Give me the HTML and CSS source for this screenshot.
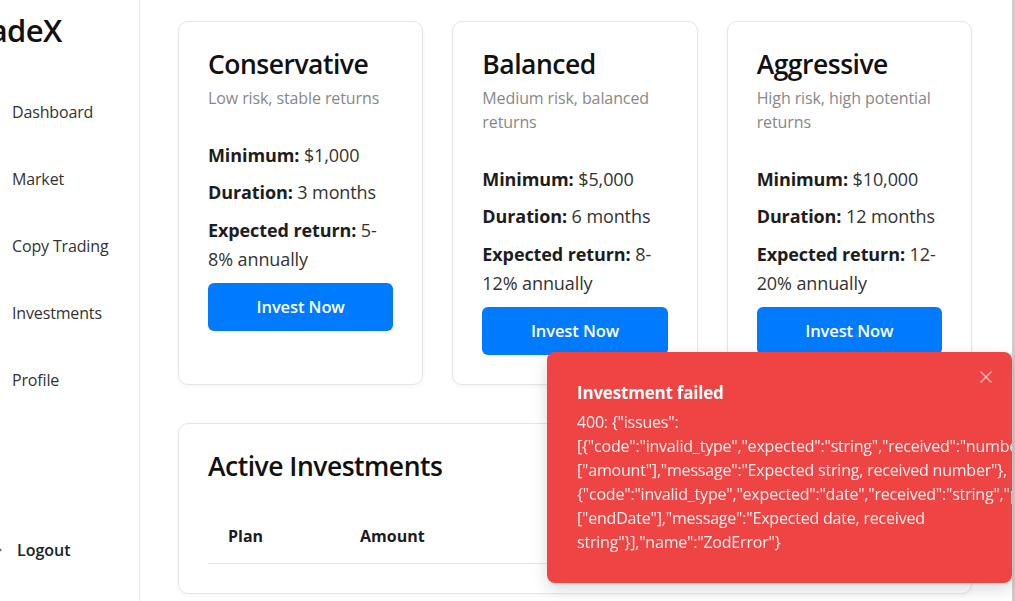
FILE: index.html
```html
<!DOCTYPE html>
<html lang="en">
<head>
<meta charset="utf-8">
<title>TradeX – Investments</title>
<link rel="stylesheet" href="styles.css">
</head>
<body>
<div class="app">
  <aside class="sidebar">
    <div class="logo">TradeX</div>
    <nav class="nav">
      <a class="nav-link" href="#">Dashboard</a>
      <a class="nav-link" href="#">Market</a>
      <a class="nav-link" href="#">Copy Trading</a>
      <a class="nav-link" href="#">Investments</a>
      <a class="nav-link" href="#">Profile</a>
    </nav>
    <button class="logout" type="button">
      <svg class="logout-icon" viewBox="0 0 24 24" width="18" height="18" fill="none" stroke="#6b7280" stroke-width="2" stroke-linecap="round" stroke-linejoin="round"><path d="M9 21H5a2 2 0 0 1-2-2V5a2 2 0 0 1 2-2h4"/><polyline points="16 17 21 12 16 7"/><line x1="21" y1="12" x2="9" y2="12"/></svg>
      <span>Logout</span>
    </button>
  </aside>

  <main class="main">
    <section class="plans">
      <article class="card plan">
        <h3 class="plan-title">Conservative</h3>
        <p class="plan-sub">Low risk, stable returns</p>
        <p class="plan-row"><strong>Minimum:</strong> $1,000</p>
        <p class="plan-row"><strong>Duration:</strong> 3 months</p>
        <p class="plan-row"><strong>Expected return:</strong> 5-8% annually</p>
        <button class="btn" type="button">Invest Now</button>
      </article>
      <article class="card plan">
        <h3 class="plan-title">Balanced</h3>
        <p class="plan-sub">Medium risk, balanced returns</p>
        <p class="plan-row"><strong>Minimum:</strong> $5,000</p>
        <p class="plan-row"><strong>Duration:</strong> 6 months</p>
        <p class="plan-row"><strong>Expected return:</strong> 8-12% annually</p>
        <button class="btn" type="button">Invest Now</button>
      </article>
      <article class="card plan">
        <h3 class="plan-title">Aggressive</h3>
        <p class="plan-sub">High risk, high potential returns</p>
        <p class="plan-row"><strong>Minimum:</strong> $10,000</p>
        <p class="plan-row"><strong>Duration:</strong> 12 months</p>
        <p class="plan-row"><strong>Expected return:</strong> 12-20% annually</p>
        <button class="btn" type="button">Invest Now</button>
      </article>
    </section>

    <section class="card active">
      <h2 class="active-title">Active Investments</h2>
      <table class="table">
        <colgroup>
          <col class="col-plan"><col class="col-amount"><col><col><col>
        </colgroup>
        <thead>
          <tr><th>Plan</th><th>Amount</th><th>Start Date</th><th>End Date</th><th>Status</th></tr>
        </thead>
        <tbody></tbody>
      </table>
    </section>
  </main>
</div>

<div class="toast" role="alert">
  <div class="toast-title">Investment failed</div>
  <div class="toast-body">400: {"issues":<br>[{"code":"invalid_type","expected":"string","received":"number","path":<br>["amount"],"message":"Expected string, received number"},<br>{"code":"invalid_type","expected":"date","received":"string","path":<br>["endDate"],"message":"Expected date, received<br>string"}],"name":"ZodError"}</div>
  <button class="toast-close" type="button" aria-label="Close">
    <svg viewBox="0 0 14 14" width="14" height="14" fill="none" stroke="currentColor" stroke-width="1.6" stroke-linecap="round"><line x1="2" y1="2" x2="12" y2="12"/><line x1="12" y1="2" x2="2" y2="12"/></svg>
  </button>
</div>
</body>
</html>
```

FILE: styles.css
```css
* { box-sizing: border-box; }

html, body {
  margin: 0;
  height: 100%;
}

body {
  font-family: "Open Sans", "Noto Sans", "Liberation Sans", sans-serif;
  color: #333;
  background: #fff;
  overflow: hidden;
}

.app {
  display: flex;
  height: 601px;
  margin-left: -61px;
  border-right: 3px solid #cdcdcd;
}

/* ---------- sidebar ---------- */
.sidebar {
  flex: 0 0 201px;
  display: flex;
  flex-direction: column;
  border-right: 1px solid #e6e6e6;
  padding: 11px 0 27px 30px;
}

.logo {
  margin-left: -9px;
  font-size: 31px;
  line-height: 38px;
  font-weight: 600;
  color: #111;
  letter-spacing: -0.6px;
  margin-bottom: 39px;
}

.nav {
  display: flex;
  flex-direction: column;
  gap: 19px;
}

.nav-link {
  display: block;
  padding: 12px 0 12px 43px;
  font-size: 16px;
  line-height: 24px;
  color: #333;
  text-decoration: none;
  letter-spacing: -0.15px;
}

.logout {
  margin-top: auto;
  display: flex;
  align-items: center;
  gap: 14px;
  padding: 12px 0 12px 16px;
  border: 0;
  background: none;
  font: inherit;
  font-size: 16px;
  line-height: 24px;
  font-weight: 600;
  color: #222;
  text-align: left;
}

.logout-icon { flex: 0 0 18px; }

/* ---------- main ---------- */
.main {
  flex: 1;
  padding: 21px 40px 0 38px;
  min-width: 0;
}

.card {
  background: #fff;
  border: 1px solid #e6e6e6;
  border-radius: 10px;
  box-shadow: 0 2px 4px rgba(0, 0, 0, 0.04);
}

.plans {
  display: grid;
  grid-template-columns: repeat(3, 1fr);
  gap: 29px;
}

.plan {
  padding: 26px 29px 29px;
}

.plan-title {
  margin: 0;
  font-size: 26.5px;
  line-height: 33.6px;
  font-weight: 600;
  color: #111;
  letter-spacing: -0.5px;
}

.plan-sub {
  margin: 4px 0 31px;
  font-size: 16px;
  line-height: 24px;
  color: #888;
  letter-spacing: -0.1px;
}

.plan-row {
  margin: 9px 0;
  font-size: 18px;
  line-height: 28.8px;
  color: #333;
  letter-spacing: -0.1px;
}

.plan-row strong {
  font-weight: 700;
  color: #1d1d1d;
}

.btn {
  display: block;
  width: 100%;
  height: 48px;
  border: 0;
  border-radius: 6px;
  background: #007bff;
  color: #fff;
  font: inherit;
  font-size: 16.5px;
  font-weight: 600;
  letter-spacing: -0.1px;
}

.active {
  margin-top: 38px;
  padding: 26px 29px 29px;
}

.active-title {
  margin: 0;
  font-size: 26.5px;
  line-height: 33.6px;
  font-weight: 600;
  color: #111;
  letter-spacing: -0.5px;
}

.table {
  width: 100%;
  margin-top: 26px;
  border-collapse: collapse;
  table-layout: fixed;
}

.col-plan { width: 132px; }
.col-amount { width: 205px; }

.table th {
  padding: 15px 20px;
  font-size: 16px;
  line-height: 24px;
  font-weight: 700;
  color: #1d1d1d;
  text-align: left;
  white-space: nowrap;
  border-bottom: 1px solid #e6e6e6;
}

/* ---------- toast ---------- */
.toast {
  position: fixed;
  top: 352px;
  right: 3px;
  width: 465px;
  padding: 28px 4px 29px 30px;
  background: #ef4444;
  color: #fff;
  border-radius: 8px;
  box-shadow: 0 6px 16px rgba(0, 0, 0, 0.15);
  overflow: hidden;
}

.toast-title {
  font-size: 17px;
  line-height: 25px;
  font-weight: 700;
  color: #fff;
  letter-spacing: -0.2px;
}

.toast-body {
  margin-top: 5px;
  font-size: 16px;
  line-height: 24px;
  white-space: nowrap;
  letter-spacing: -0.2px;
  color: rgba(255, 255, 255, 0.92);
}

.toast-close {
  position: absolute;
  top: 18px;
  right: 19px;
  width: 14px;
  height: 14px;
  padding: 0;
  border: 0;
  background: none;
  color: rgba(255, 255, 255, 0.55);
  display: flex;
}
```
